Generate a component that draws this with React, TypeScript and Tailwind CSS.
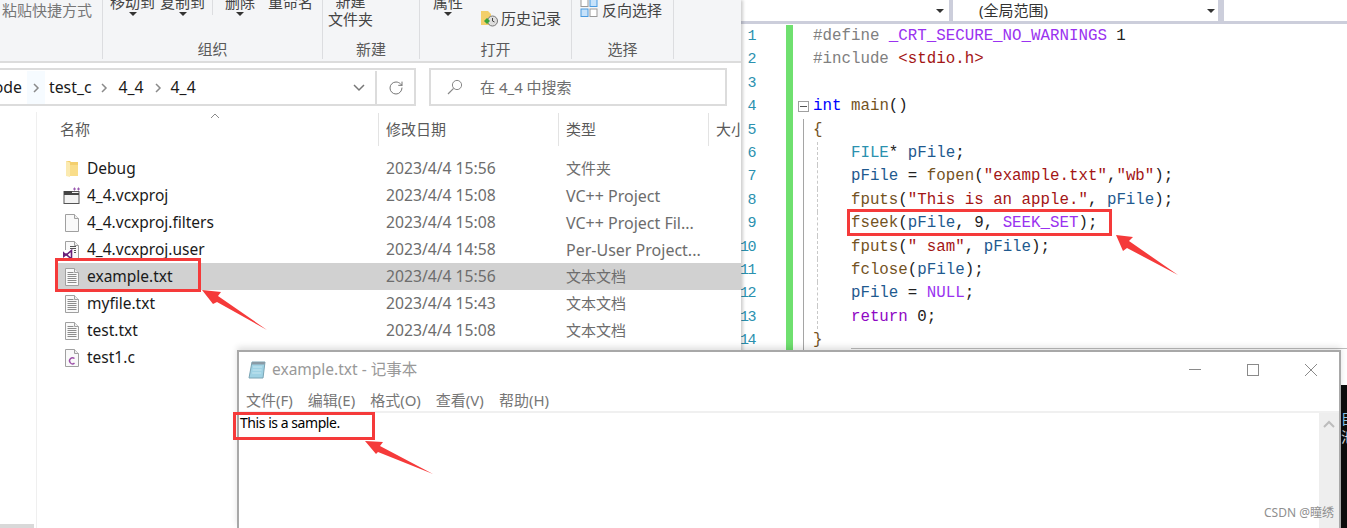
import React from "react";
import { RotateCw } from "lucide-react";

const sans = "font-['Noto_Sans','Noto_Sans_CJK_SC',sans-serif]";

/* ——— file icons ——— */
function FolderIcon() {
  return (
    <svg viewBox="0 0 14 18" className="h-[18px] w-[14px]" aria-hidden="true">
      <path d="M1 1h4l1 1h7v14H1z" fill="#f4cf6e" />
      <path d="M1 1l4 1.5v14.5l-4-1z" fill="#fbeab0" />
      <path d="M5 5h8v11H5z" fill="#f9dd8a" />
    </svg>
  );
}

function ProjectIcon() {
  return (
    <svg viewBox="0 0 18 18" className="h-[18px] w-[18px]" aria-hidden="true">
      <rect x="1" y="4.5" width="15" height="12" fill="#f3f3f3" stroke="#555" />
      <path d="M1 4h8v2h7v2H1z" fill="#444" />
      <path d="M10 2h3M11.5 .5v3M14 2h3M15.5 .5v3" stroke="#9a5ab0" strokeWidth="1" />
    </svg>
  );
}

function DocIcon({ lines, kind }: { lines?: boolean; kind?: "c" | "vs" }) {
  return (
    <svg viewBox="0 0 18 20" className="h-5 w-[18px]" aria-hidden="true">
      <path d="M2.5 1.5h9l4 4v13h-13z" fill="#f9f9f9" stroke="#a0a0a0" />
      <path d="M11.5 1.5v4h4" fill="#eee" stroke="#a0a0a0" />
      {lines && <path d="M4.5 5.5h6M4.5 7.5h9M4.5 9.5h9M4.5 11.5h9M4.5 13.5h9M4.5 15.5h9" stroke="#8c8c8c" />}
      {kind === "c" && <path d="M11.5 10.5a3 3 0 1 0 0 4.6" fill="none" stroke="#9c4fa8" strokeWidth="1.4" />}
      {kind === "vs" && (
        <>
          <path d="M7 6.5h6M7 8.5h6M11 10.5h2M11 12.5h2" stroke="#555" />
          <path d="M0 10h10v10H0z" fill="#fff" />
          <path d="M.8 13l2.4 2 5.3-4.6v8.6l-5.3-4.6-2.4 2z" fill="none" stroke="#68217a" strokeWidth="1.6" />
        </>
      )}
    </svg>
  );
}

function Caret() {
  return <span className="block h-0 w-0 border-x-[4px] border-t-[4px] border-x-transparent border-t-[#333]" />;
}

function Crumb() {
  return (
    <svg viewBox="0 0 8 12" className="h-3 w-2" aria-hidden="true">
      <path d="M2 2l4 4-4 4" fill="none" stroke="#8a8a8a" strokeWidth="1.5" />
    </svg>
  );
}

function RibbonGroup({ label, width, children }: { label: string; width: string; children?: React.ReactNode }) {
  return (
    <div className={`${width} flex h-[59px] shrink-0 flex-col border-r border-[#dcdde0]`}>
      <div className="h-[39px] overflow-hidden text-[15px] leading-5 text-[#444]">{children}</div>
      <div className="text-center text-[15px] leading-5 text-[#5a5a5a]">{label}</div>
    </div>
  );
}

function Ribbon() {
  return (
    <div className="flex h-[63px] shrink-0 border-b-2 border-[#dcdcdc] bg-[#f4f5f7]">
      <RibbonGroup label="" width="w-[103px]">
        <div className="pl-[2px] text-[#777]">粘贴快捷方式</div>
      </RibbonGroup>
      <RibbonGroup label="组织" width="w-[220px]">
        <div className="flex -translate-y-2 pl-[7px]">
          <div className="flex flex-col items-center">
            <span>移动到</span>
            <Caret />
          </div>
          <div className="ml-[4px] flex w-[47px] flex-col items-center">
            <span>复制到</span>
            <Caret />
          </div>
          <div className="ml-[6px] h-[23px] border-l border-[#dcdde0]" />
          <div className="ml-[12px] flex flex-col items-center">
            <span>删除</span>
            <Caret />
          </div>
          <span className="ml-[13px]">重命名</span>
        </div>
      </RibbonGroup>
      <RibbonGroup label="新建" width="w-[97px]">
        <div className="flex -translate-y-2 flex-col items-center pr-[41px] leading-[18px]">
          <span>新建</span>
          <span>文件夹</span>
        </div>
      </RibbonGroup>
      <RibbonGroup label="打开" width="w-[152px]">
        <div className="flex">
          <div className="ml-[13px] flex -translate-y-2 flex-col items-center">
            <span>属性</span>
            <Caret />
          </div>
          <div className="ml-[17px] mt-[8px] flex items-center gap-[3px]">
            <svg viewBox="0 0 18 18" className="h-[18px] w-[18px]" aria-hidden="true">
              <path d="M1 2h7l3 3v11H1z" fill="#f3cf6b" />
              <circle cx="12.5" cy="12" r="5" fill="#dedede" stroke="#777" />
              <path d="M12.5 9v3l2 1" fill="none" stroke="#444" />
              <path d="M4 12l3-3 3 3-3 3z" fill="#3aa33a" />
            </svg>
            <span>历史记录</span>
          </div>
        </div>
      </RibbonGroup>
      <RibbonGroup label="选择" width="w-[102px]">
        <div className="flex items-start pl-[8px] text-[#444]">
          <svg viewBox="0 0 18 18" className="mr-[4px] h-[18px] w-[18px] shrink-0" aria-hidden="true">
            <rect x="1" y="-1" width="7" height="7.5" fill="#fff" stroke="#999" />
            <rect x="10" y="-1" width="7" height="7.5" fill="#c7e2fa" stroke="#4a9be0" />
            <rect x="1" y="9" width="7" height="7.5" fill="#c7e2fa" stroke="#4a9be0" />
            <rect x="10" y="9" width="7" height="7.5" fill="#fff" stroke="#999" />
          </svg>
          <span className="whitespace-nowrap">反向选择</span>
        </div>
      </RibbonGroup>
    </div>
  );
}

function AddressBar() {
  return (
    <div className="mt-[5px] flex h-[38px] shrink-0 text-[15.8px] text-[#1a1a1a]">
      <div className="flex w-[416px] items-center border-y-2 border-r-2 border-[#dcdcdc] pt-px">
        <span className="flex w-[27px] shrink-0 justify-end overflow-hidden pr-[5px] whitespace-nowrap">ode</span>
        <span className="flex h-full w-[18px] shrink-0 items-center justify-center bg-[#f6fbff]">
          <Crumb />
        </span>
        <span className="ml-[4px]">test_c</span>
        <span className="ml-[9px]"><Crumb /></span>
        <span className="ml-[10px]">4_4</span>
        <span className="ml-[10px]"><Crumb /></span>
        <span className="ml-[9px]">4_4</span>
        <svg viewBox="0 0 14 10" className="ml-[156px] h-[10px] w-[14px] shrink-0" aria-hidden="true">
          <path d="M2 2l5 5 5-5" fill="none" stroke="#777" strokeWidth="1.5" />
        </svg>
        <div className="ml-auto flex h-full w-[39px] shrink-0 items-center justify-center border-l-2 border-[#dcdcdc]">
          <RotateCw size={16} strokeWidth={1.5} color="#777" />
        </div>
      </div>
      <div className="ml-[13px] flex w-[298px] items-center border-2 border-[#dcdcdc] pl-[16px] text-[15px] text-[#6d6d6d]">
        <svg viewBox="0 0 16 16" className="h-4 w-4" aria-hidden="true">
          <circle cx="10" cy="6" r="4.6" fill="none" stroke="#888" />
          <path d="M6.6 9.4L1 15" stroke="#888" strokeWidth="1.2" />
        </svg>
        <span className="ml-[17px] whitespace-nowrap">在 4_4 中搜索</span>
      </div>
    </div>
  );
}

const files = [
  { name: "Debug", date: "2023/4/4 15:56", type: "文件夹", icon: <FolderIcon /> },
  { name: "4_4.vcxproj", date: "2023/4/4 15:08", type: "VC++ Project", latin: true, icon: <ProjectIcon /> },
  { name: "4_4.vcxproj.filters", date: "2023/4/4 15:08", type: "VC++ Project Fil...", latin: true, icon: <DocIcon /> },
  { name: "4_4.vcxproj.user", date: "2023/4/4 14:58", type: "Per-User Project...", latin: true, icon: <DocIcon kind="vs" /> },
  { name: "example.txt", date: "2023/4/4 15:56", type: "文本文档", icon: <DocIcon lines />, selected: true },
  { name: "myfile.txt", date: "2023/4/4 15:43", type: "文本文档", icon: <DocIcon lines /> },
  { name: "test.txt", date: "2023/4/4 15:08", type: "文本文档", icon: <DocIcon lines /> },
  { name: "test1.c", date: "", type: "", icon: <DocIcon kind="c" /> },
];

function FileList() {
  return (
    <div className="mt-[6px] flex min-h-0 flex-1">
      {/* nav pane, only a sliver of its scrollbar shows */}
      <div className="flex w-[36px] shrink-0 flex-col justify-end">
        <div className="h-[4px] w-[34px] bg-[#d9d9d9]" />
      </div>
      <div className="flex flex-1 flex-col border-l border-[#efefef] text-[15px]">
        <div className="flex h-[34px] shrink-0 pt-[1px] text-[#5a5a5a]">
          <div className="relative flex w-[342px] shrink-0 items-center border-r border-[#e3e3e3] pl-[23px]">
            名称
            <svg viewBox="0 0 10 6" className="absolute top-0 left-[173px] h-[6px] w-[10px]" aria-hidden="true">
              <path d="M1 5l4-4 4 4" fill="none" stroke="#8a8a8a" />
            </svg>
          </div>
          <div className="flex w-[180px] shrink-0 items-center border-r border-[#e3e3e3] pl-[7px]">修改日期</div>
          <div className="flex w-[150px] shrink-0 items-center border-r border-[#e3e3e3] pl-[7px]">类型</div>
          <div className="flex items-center overflow-hidden pl-[7px] whitespace-nowrap">大小</div>
        </div>
        <div className="mt-[9px] flex flex-col">
          {files.map((f) => (
            <div key={f.name} className={`ml-[20px] flex h-[27px] items-center ${f.selected ? "bg-[#d1d1d1]" : ""}`}>
              <span className="flex w-[30px] shrink-0 justify-center">{f.icon}</span>
              <span className="w-[299px] shrink-0 text-[15.5px] whitespace-nowrap text-[#1a1a1a]">{f.name}</span>
              <span className="w-[180px] shrink-0 text-[15.7px] whitespace-nowrap text-[#6d6d6d]">{f.date}</span>
              <span className={`whitespace-nowrap text-[#6d6d6d] ${f.latin ? "text-[16px]" : "text-[15px]"}`}>{f.type}</span>
            </div>
          ))}
        </div>
      </div>
    </div>
  );
}

/* ——— code ——— */
const fn = "text-[#74531f]";
const pl = "text-[#222]";
const lv = "text-[#1f5a8f]";
const st = "text-[#a31515]";
const mc = "text-[#9a32f0]";
const pp = "text-[#808080]";

const code: [string, string][][] = [
  [["#define ", pp], ["_CRT_SECURE_NO_WARNINGS", mc], [" 1", pl]],
  [["#include ", pp], ["<stdio.h>", st]],
  [],
  [["int", "text-[#0000ff]"], [" ", pl], ["main", fn], ["()", pl]],
  [["{", fn]],
  [["    ", pl], ["FILE", "text-[#2b91af]"], ["* ", pl], ["pFile", lv], [";", pl]],
  [["    ", pl], ["pFile", lv], [" = ", pl], ["fopen", fn], ["(", pl], ['"example.txt"', st], [",", pl], ['"wb"', st], [");", pl]],
  [["    ", pl], ["fputs", fn], ["(", pl], ['"This is an apple."', st], [", ", pl], ["pFile", lv], [");", pl]],
  [["    ", pl], ["fseek", fn], ["(", pl], ["pFile", lv], [", 9, ", pl], ["SEEK_SET", mc], [");", pl]],
  [["    ", pl], ["fputs", fn], ["(", pl], ['" sam"', st], [", ", pl], ["pFile", lv], [");", pl]],
  [["    ", pl], ["fclose", fn], ["(", pl], ["pFile", lv], [");", pl]],
  [["    ", pl], ["pFile", lv], [" = ", pl], ["NULL", mc], [";", pl]],
  [["    ", pl], ["return", "text-[#8f08c4]"], [" 0;", pl]],
  [["}", fn]],
];

function CodeWindow() {
  return (
    <div className="absolute top-0 left-[741px] flex h-[352px] w-[606px] flex-col overflow-hidden bg-white font-['Liberation_Mono',monospace]">
      <div className={`${sans} flex h-[24px] shrink-0 border-b-[3px] border-[#cccedb] text-[15px] text-[#333]`}>
        <div className="flex w-[212px] shrink-0 items-center justify-end border-r-[4px] border-[#cccedb] pr-[5px]">
          <Caret />
        </div>
        <div className="flex w-[271px] shrink-0 items-center justify-between border-r-[6px] border-[#cccedb] pr-[3px] pl-[26px]">
          <span>(全局范围)</span>
          <Caret />
        </div>
      </div>
      <div className="mt-[1px] flex flex-col text-[15.8px] leading-[23.4px]">
        {code.map((line, i) => (
          <div key={i} className="flex h-[23.4px] whitespace-pre">
            <span className="flex w-[14px] shrink-0 justify-end text-[15px] tracking-[-1.5px] text-[#2b91af]">{i + 1}</span>
            <span className="ml-[31px] w-[7px] shrink-0 bg-[#6fe06f]" />
            <span className="relative w-[20px] shrink-0">
              {i === 3 && (
                <span className="absolute top-[6px] left-[5px] flex h-[11px] w-[11px] items-center justify-center border border-[#a0a0a0]">
                  <span className="h-px w-[7px] bg-[#555]" />
                </span>
              )}
              {i > 3 && <span className="absolute inset-y-0 left-[10px] w-px bg-[#a5a5a5]" />}
            </span>
            <span className="relative">
              {i > 4 && i < 13 && <span className="absolute inset-y-0 left-[4px] border-l border-dashed border-[#c8c8c8]" />}
              {line.map(([text, color], j) => (
                <span key={j} className={color}>
                  {text}
                </span>
              ))}
            </span>
          </div>
        ))}
      </div>
      {/* edge of the panel docked under the editor */}
      <div className="absolute top-[348px] right-0 left-[110px] border-t border-[#bdbdbd]" />
    </div>
  );
}

function Notepad() {
  return (
    <div className={`${sans} absolute top-[350px] left-[237px] flex h-[178px] w-[1104px] flex-col border-x-2 border-t-2 border-[#a8a8a8] bg-white shadow-[0_-3px_6px_rgba(0,0,0,.12)]`}>
      <div className="flex h-[35px] shrink-0 items-center pl-[9px] text-[15.5px] text-[#999]">
        <svg viewBox="0 0 18 20" className="h-5 w-[18px]" aria-hidden="true">
          <path d="M4 2h13l-2 16H1z" fill="#9fd2e4" stroke="#7aa4b4" />
          <path d="M4 2h13l-.4 2.5H3.6z" fill="#8a9aa5" />
          <path d="M5 7h9M4.6 10h9M4.2 13h9" stroke="#c6e6f0" />
        </svg>
        <span className="ml-[6px]">example.txt - 记事本</span>
        <div className="mr-[22px] ml-auto flex items-center gap-[46px]">
          <span className="h-px w-[12px] bg-[#8a8a8a]" />
          <span className="h-[12px] w-[12px] border border-[#8a8a8a]" />
          <svg viewBox="0 0 12 12" className="h-[12px] w-[12px]" aria-hidden="true">
            <path d="M0 0l12 12M12 0L0 12" stroke="#8a8a8a" />
          </svg>
        </div>
      </div>
      <div className="flex h-[24px] shrink-0 items-center gap-[15px] pt-[3px] pl-[7px] text-[15px] text-[#777]">
        <span>文件(F)</span>
        <span>编辑(E)</span>
        <span>格式(O)</span>
        <span>查看(V)</span>
        <span>帮助(H)</span>
      </div>
      <div className="flex flex-1 border-t-2 border-[#f0f0f0]">
        <div className="flex-1 pl-[1px] text-[14px] leading-5 tracking-[-0.45px] text-black">This is a sample.</div>
        <div className="flex w-[20px] shrink-0 justify-center bg-[#eeeeee] pt-[7px]">
          <svg viewBox="0 0 12 8" className="h-2 w-3" aria-hidden="true">
            <path d="M1 7l5-5 5 5" fill="none" stroke="#bcbcbc" strokeWidth="2" />
          </svg>
        </div>
      </div>
    </div>
  );
}

export default function App() {
  return (
    <div className="relative h-[528px] w-[1347px] overflow-hidden bg-white">
      <CodeWindow />

      {/* explorer */}
      <div className={`${sans} absolute top-0 left-0 flex h-[528px] w-[741px] flex-col overflow-hidden bg-white shadow-[2px_0_3px_rgba(0,0,0,.2)]`}>
        <Ribbon />
        <AddressBar />
        <FileList />
      </div>

      {/* terminal peeking out on the right */}
      <div className="absolute top-[385px] right-0 h-[143px] w-[6px] overflow-hidden bg-[#0c0c0c] pt-[24px] font-['Noto_Sans_CJK_SC',sans-serif] text-[14px] leading-[18px] text-[#8fc7e8]">
        <div>目</div>
        <div className="text-[#ddd]">池</div>
      </div>

      <Notepad />

      {/* annotations */}
      <div className="absolute top-[258px] left-[55px] h-[34px] w-[146px] border-[3px] border-[#f53a3a]" />
      <div className="absolute top-[209px] left-[847px] h-[27px] w-[265px] border-[3px] border-[#f53a3a]" />
      <div className="absolute top-[412px] left-[233px] h-[28px] w-[142px] border-[3px] border-[#f53a3a]" />
      <svg viewBox="0 0 1347 528" className="pointer-events-none absolute inset-0 h-[528px] w-[1347px]" aria-hidden="true">
        <polygon points="202,290 221,292 218,296 267,330 217,302 213,304" fill="#f53a3a" />
        <polygon points="1116,235 1133,237 1129,241 1178,275 1127,248 1123,251" fill="#f53a3a" />
        <polygon points="365,441 383,442 380,446 433,474 378,452 376,454" fill="#f53a3a" />
      </svg>

      <div className="absolute top-[505px] left-[1264px] font-['Noto_Sans','Noto_Sans_CJK_SC',sans-serif] text-[12px] leading-4 whitespace-nowrap text-[#8f8f8f]">
        CSDN @瞳绣
      </div>
    </div>
  );
}
